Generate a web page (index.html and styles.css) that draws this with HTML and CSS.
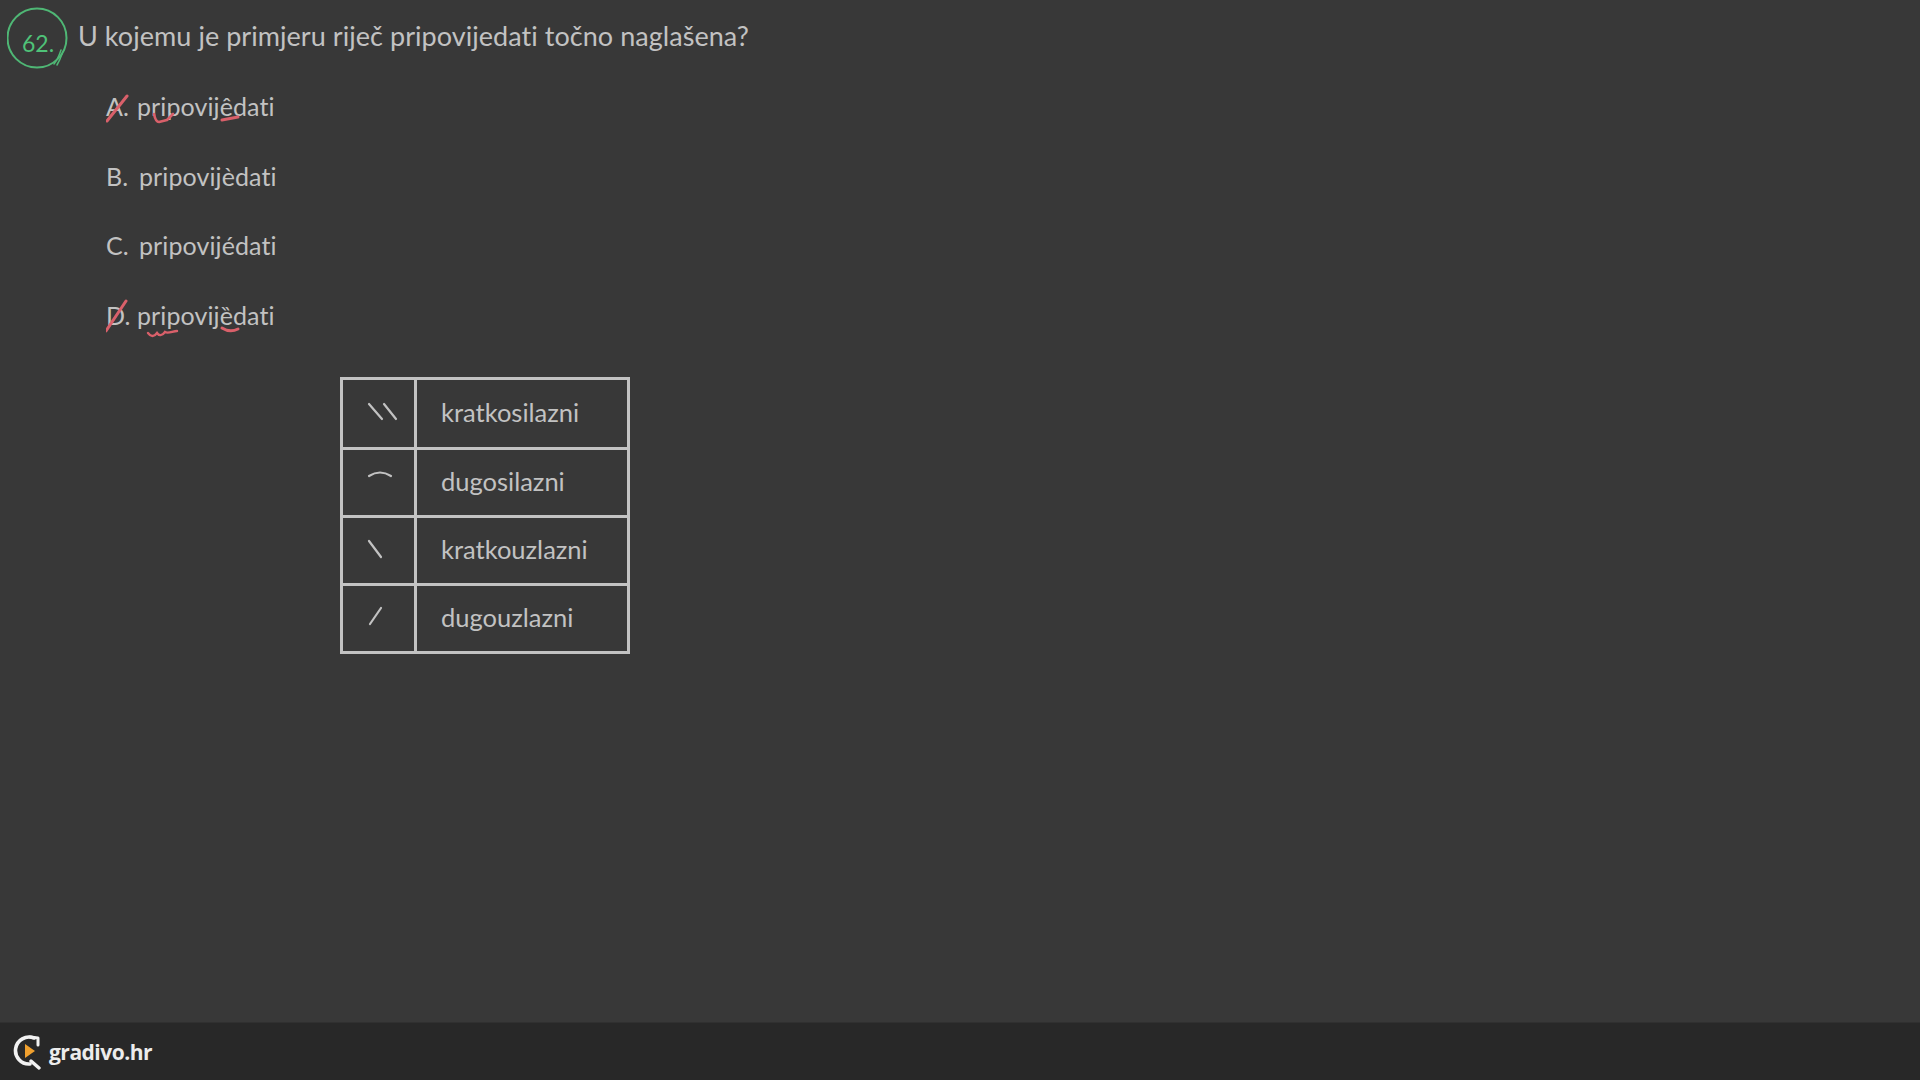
FILE: index.html
```html
<!DOCTYPE html>
<html lang="hr">
<head>
<meta charset="utf-8">
<title>Zadatak 62</title>
<link rel="stylesheet" href="styles.css">
</head>
<body>
<div class="page">
  <main class="board">
    <div class="question">
      <div class="badge">
        <svg class="badge-ring" width="66" height="66" viewBox="0 0 66 66" fill="none">
          <circle cx="30" cy="31" r="29.5" stroke="#4fb775" stroke-width="2"/>
          <path d="M47 57 Q51 52 54 43 M50 58 Q53 53 55 47" stroke="#4fb775" stroke-width="1.5" stroke-linecap="round"/>
        </svg>
        <span class="badge-num">62.</span>
      </div>
      <h1 class="question-text">U kojemu je primjeru riječ pripovijedati točno naglašena?</h1>
    </div>
    <ol class="options">
      <li class="option option-tight">
        <span class="letter">A.</span><span>pripovijêdati</span>
        <svg class="mark" width="190" height="60" viewBox="0 0 190 60" fill="none">
          <path d="M1 44 L21 19" stroke="#d9606a" stroke-width="3" stroke-linecap="round"/>
          <path d="M48 37 C49 42 50 45 53 45 L61 43 L67 37" stroke="#d9606a" stroke-width="2.6" stroke-linecap="round" stroke-linejoin="round"/>
          <path d="M116 43 L132 40" stroke="#d9606a" stroke-width="3" stroke-linecap="round"/>
        </svg>
      </li>
      <li class="option"><span class="letter">B.</span><span>pripovijèdati</span></li>
      <li class="option"><span class="letter">C.</span><span>pripovijédati</span></li>
      <li class="option option-tight">
        <span class="letter">D.</span><span>pripovijȅdati</span>
        <svg class="mark" width="190" height="60" viewBox="0 0 190 60" fill="none">
          <path d="M0 45 L20 15" stroke="#d9606a" stroke-width="3" stroke-linecap="round"/>
          <path d="M42 47 C45 51 48 51 51 47 C53 50 56 50 59 46 C62 48 67 45 71 45" stroke="#d9606a" stroke-width="2.4" stroke-linecap="round"/>
          <path d="M116 42 Q124 47 132 43" stroke="#d9606a" stroke-width="3" stroke-linecap="round"/>
        </svg>
      </li>
    </ol>
    <table class="accents">
      <tr class="row-tall">
        <td class="symbol"><svg width="71" height="65" viewBox="0 0 71 65" fill="none"><path d="M26 23 L39 38 M41 23 L53 38" class="stroke"/></svg></td>
        <td class="term">kratkosilazni</td>
      </tr>
      <tr>
        <td class="symbol"><svg width="71" height="65" viewBox="0 0 71 65" fill="none"><path d="M26 26 Q37 19 48 26" class="stroke"/></svg></td>
        <td class="term">dugosilazni</td>
      </tr>
      <tr>
        <td class="symbol"><svg width="71" height="65" viewBox="0 0 71 65" fill="none"><path d="M26 23 L38 39" class="stroke"/></svg></td>
        <td class="term">kratkouzlazni</td>
      </tr>
      <tr>
        <td class="symbol"><svg width="71" height="65" viewBox="0 0 71 65" fill="none"><path d="M27 38 L38 22" class="stroke"/></svg></td>
        <td class="term">dugouzlazni</td>
      </tr>
    </table>
  </main>
  <footer class="footer">
    <svg class="logo" width="30" height="36" viewBox="0 0 30 36" fill="none">
      <path d="M21 4 A13.5 13.5 0 1 0 17 30" stroke="#f2f2f2" stroke-width="3.6" stroke-linecap="round"/>
      <path d="M17 3 L25 4 L25 11" stroke="#f2f2f2" stroke-width="3" stroke-linecap="round" stroke-linejoin="round"/>
      <path d="M18 27 L26 34" stroke="#f2f2f2" stroke-width="3.4" stroke-linecap="round"/>
      <path d="M12 10 L22 17 L12 24 Z" fill="#f0a02e"/>
    </svg>
    <span class="brand">gradivo.hr</span>
  </footer>
</div>
</body>
</html>
```
FILE: styles.css
```css
* { box-sizing: border-box; }
html, body { margin: 0; height: 100%; }
body {
  background: #383838;
  color: #c2c2c2;
  font-family: Lato, "Open Sans", sans-serif;
}
.page {
  height: 100vh;
  display: flex;
  flex-direction: column;
}
.board {
  flex: 1;
  padding: 7px 0 0 7px;
}
.question {
  display: flex;
  align-items: flex-start;
  gap: 11px;
}
.badge {
  position: relative;
  width: 60px;
  height: 62px;
  flex: none;
}
.badge-ring {
  position: absolute;
  left: 0;
  top: 0;
}
.badge-num {
  position: absolute;
  left: 15px;
  top: 21px;
  color: #4fc278;
  font-size: 23px;
  font-weight: 400;
  line-height: 30px;
}
.question-text {
  margin: 12px 0 0;
  font-size: 27px;
  font-weight: 400;
  line-height: 34px;
  letter-spacing: 0.05px;
}
.options {
  list-style: none;
  margin: 20px 0 0;
  padding: 0 0 0 99px;
  display: flex;
  flex-direction: column;
  gap: 35.5px;
}
.option {
  position: relative;
  display: flex;
  gap: 10px;
  height: 34px;
  font-size: 25px;
  line-height: 34px;
  letter-spacing: 0.1px;
}
.option-tight { gap: 8px; }
.letter { width: 23px; }
.mark {
  position: absolute;
  left: 0;
  top: -12px;
  pointer-events: none;
}
.accents {
  margin: 45px 0 0 333px;
  width: 290px;
  height: 275px;
  border-collapse: collapse;
  border: 3px solid #c2c2c2;
}
.accents td {
  border: 3px solid #c2c2c2;
  padding: 0;
}
.row-tall { height: 70px; }
.symbol {
  width: 71px;
  line-height: 0;
}
.accents .term {
  padding: 0 0 3px 24px;
  font-size: 25.5px;
}
.stroke {
  stroke: #c2c2c2;
  stroke-width: 2.2;
  stroke-linecap: round;
}
.footer {
  height: 58px;
  flex: none;
  display: flex;
  align-items: center;
  gap: 6px;
  padding: 0 0 0 13px;
  background: #282828;
  border-top: 1px solid #303030;
}
.brand {
  color: #ececec;
  font-family: "Open Sans", sans-serif;
  font-size: 21px;
  font-weight: 700;
  letter-spacing: -0.5px;
}
```
